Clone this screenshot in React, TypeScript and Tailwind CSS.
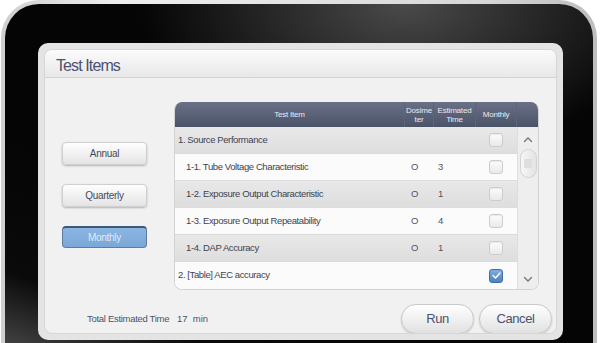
import React from "react";

type Row = {
  label: string;
  sub?: boolean;
  dose?: string;
  time?: string;
  checked?: boolean;
};

const ROWS: Row[] = [
  { label: "1. Source Performance" },
  { label: "1-1. Tube Voltage Characteristic", sub: true, dose: "O", time: "3" },
  { label: "1-2. Exposure Output Characteristic", sub: true, dose: "O", time: "1" },
  { label: "1-3. Exposure Output Repeatability", sub: true, dose: "O", time: "4" },
  { label: "1-4. DAP Accuracy", sub: true, dose: "O", time: "1" },
  { label: "2. [Table] AEC accuracy", checked: true },
];

function CheckBox({ checked }: { checked?: boolean }) {
  if (checked) {
    return (
      <div className="w-[14px] h-[14px] rounded-[3px] border border-[#3f6fa6] bg-[linear-gradient(#7eaee0,#4d82bf)] flex items-center justify-center">
        <svg width="9" height="7" viewBox="0 0 9 7">
          <path d="M1 3.5 L3.5 6 L8 1" fill="none" stroke="#fff" strokeWidth="1.4" strokeLinecap="round" strokeLinejoin="round" />
        </svg>
      </div>
    );
  }
  return <div className="w-[14px] h-[14px] rounded-[3px] border border-[#cdcdcd] bg-[linear-gradient(#fdfdfd,#e9e9e9)] shadow-[inset_0_1px_1px_rgba(0,0,0,0.08)]" />;
}

function SideButton({ label, active }: { label: string; active?: boolean }) {
  return (
    <div
      className={
        active
          ? "w-[85px] h-[22px] rounded-[4px] border border-[#5f7c9c] border-t-[#3e5878] border-t-2 bg-[linear-gradient(#8cb6e2,#7aa7d8)] flex items-center justify-center text-[10px] text-[#dfeaf6] tracking-[-0.3px]"
          : "w-[85px] h-[23px] rounded-[4px] border border-[#cfcfcf] bg-[linear-gradient(#fefefe,#e4e4e4)] shadow-[0_1px_2px_rgba(0,0,0,0.25)] flex items-center justify-center text-[10px] text-[#454a5c] tracking-[-0.3px]"
      }
    >
      {label}
    </div>
  );
}

function PillButton({ label }: { label: string }) {
  return (
    <div className="w-[73px] h-[30px] rounded-full border border-[#c9c9c9] bg-[linear-gradient(#ffffff,#e1e1e1)] shadow-[0_1px_2px_rgba(0,0,0,0.2)] flex items-center justify-center text-[13px] text-[#4b5170] tracking-[-0.4px]">
      {label}
    </div>
  );
}

export default function App() {
  return (
    <div className="w-[601px] h-[343px] bg-white overflow-hidden font-['Liberation_Sans',Arial,sans-serif]">
      {/* tablet rim */}
      <div className="ml-[1px] w-[596px] h-[380px] rounded-t-[38px] bg-[linear-gradient(90deg,#cfcfcf,#eeeeee_20%,#d8d8d8_80%,#bdbdbd)] p-[4px]">
        {/* bezel */}
        <div className="h-full rounded-t-[34px] bg-[#050505] bg-[radial-gradient(ellipse_45%_40%_at_68%_0%,#4a4a4a,transparent),linear-gradient(20deg,#5a5a5a_0%,#0a0a0a_18%,transparent_40%)] pl-[33px] pt-[39px] pr-[30px]">
          {/* dialog */}
          <div className="h-[297px] rounded-[10px] bg-[#e4e4e4] p-[6px]">
            <div className="h-full rounded-[8px] bg-[#f1f1f1] border border-[#d6d6d6] flex flex-col overflow-hidden">
              <div className="h-[28px] shrink-0 bg-[linear-gradient(#fbfbfb,#e8e8e8)] border-b border-[#d2d2d2] flex items-center pl-[11px] pt-[4px]">
                <span className="text-[16px] text-[#4b5170] tracking-[-0.9px]">Test Items</span>
              </div>

              <div className="flex pt-[24px]">
                {/* period buttons */}
                <div className="w-[129px] shrink-0 pl-[17px] pt-[40px] flex flex-col gap-[19px]">
                  <SideButton label="Annual" />
                  <SideButton label="Quarterly" />
                  <SideButton label="Monthly" active />
                </div>

                {/* table */}
                <div className="w-[365px] rounded-[8px] overflow-hidden border border-[#d3d3d3] border-t-0 bg-white">
                  <div className="h-[25px] flex bg-[linear-gradient(#6a7187,#4b5369)] text-[#e8eaf0] text-[8px] leading-[9px] tracking-[-0.2px]">
                    <div className="w-[230px] flex items-center justify-center border-r border-[#5c6479]">Test Item</div>
                    <div className="w-[29px] flex items-center justify-center text-center border-r border-[#5c6479]">Dosime<br />ter</div>
                    <div className="w-[42px] flex items-center justify-center text-center border-r border-[#5c6479]">Estimated<br />Time</div>
                    <div className="w-[41px] flex items-center justify-center border-r border-[#5c6479]">Monthly</div>
                    <div className="flex-1" />
                  </div>
                  <div className="flex">
                    <div className="w-[342px]">
                      {ROWS.map((r, i) => (
                        <div
                          key={r.label}
                          className={`h-[27px] flex items-center text-[9.5px] text-[#3f4350] tracking-[-0.4px] border-b border-[#dcdcdc] last:border-b-0 ${
                            i % 2 === 0 ? "bg-[linear-gradient(#e8e8e8,#dedede)]" : "bg-[#fbfbfb]"
                          }`}
                        >
                          <div className={`w-[230px] ${r.sub ? "pl-[11px]" : "pl-[3px]"}`}>{r.label}</div>
                          <div className="w-[29px] pl-[6px] text-[#505462]">{r.dose}</div>
                          <div className="w-[42px] pl-[4px] text-[#505462]">{r.time}</div>
                          <div className="w-[41px] flex justify-center pr-[1px]">
                            <CheckBox checked={r.checked} />
                          </div>
                        </div>
                      ))}
                    </div>
                    {/* scroll bar */}
                    <div className="flex-1 bg-[#eeeeee] border-l border-[#dedede] flex flex-col items-center pt-[9px] pb-[6px]">
                      <svg width="10" height="7" viewBox="0 0 10 7">
                        <path d="M1.5 5.5 L5 2 L8.5 5.5" fill="none" stroke="#707585" strokeWidth="1.3" strokeLinecap="round" />
                      </svg>
                      <div className="mt-[6px] w-[17px] h-[29px] rounded-full border border-[#d2d2d2] bg-[linear-gradient(90deg,#f7f7f7,#e3e3e3)] flex items-center justify-center">
                        <div className="w-[8px] h-[9px] bg-[#dedede]" />
                      </div>
                      <div className="flex-1" />
                      <svg width="10" height="7" viewBox="0 0 10 7">
                        <path d="M1.5 1.5 L5 5 L8.5 1.5" fill="none" stroke="#707585" strokeWidth="1.3" strokeLinecap="round" />
                      </svg>
                    </div>
                  </div>
                </div>
              </div>

              {/* footer */}
              <div className="mt-[14px] flex items-center">
                <div className="pl-[42px] w-[132px] text-[9.5px] text-[#4b5170] tracking-[-0.3px]">Total Estimated Time</div>
                <div className="text-[9.5px] text-[#4b5170]">17&nbsp; min</div>
                <div className="ml-auto mr-[4px] flex gap-[5px]">
                  <PillButton label="Run" />
                  <PillButton label="Cancel" />
                </div>
              </div>
            </div>
          </div>
        </div>
      </div>
    </div>
  );
}
